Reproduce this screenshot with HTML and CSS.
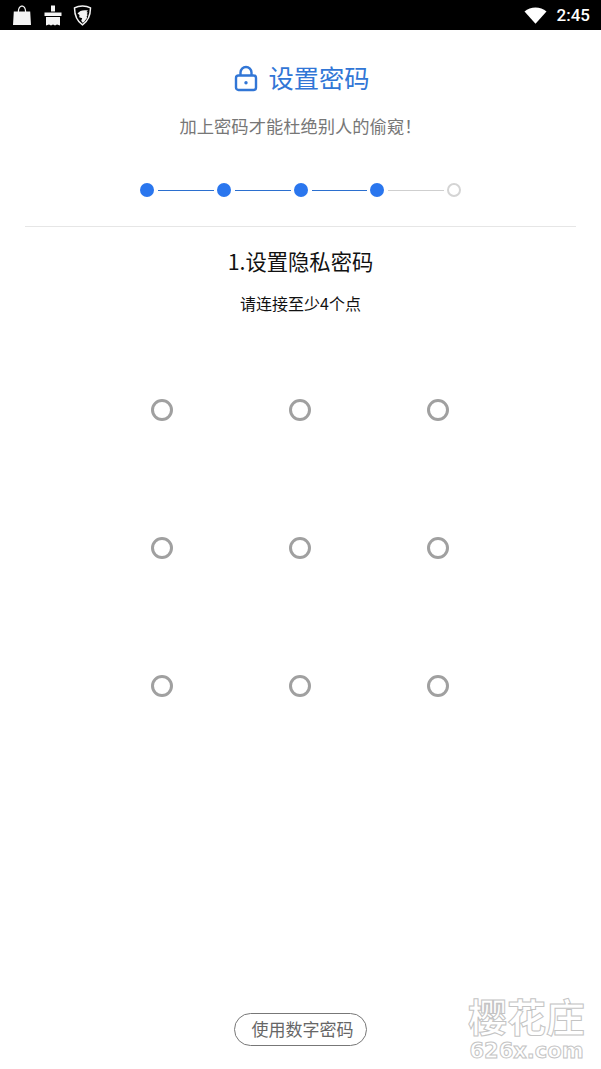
FILE: index.html
```html
<!DOCTYPE html>
<html lang="zh">
<head>
    <meta charset="UTF-8">
    <meta name="viewport" content="width=device-width, initial-scale=1.0">
    <title>设置密码</title>
    <link rel="stylesheet" href="styles.css">
</head>
<body>
    <div class="statusBar">
        <div class="statusLeft">
            <svg width="20" height="21" viewBox="0 0 20 21"><path d="M1.800 6.500H5.800C5.900 2.800 7.600 .5 10 .5s4.100 2.300 4.200 6h4L19 20H1zM7 6.500h6C12.900 3.500 11.700 1.700 10 1.700S7.100 3.500 7 6.500z" fill="#f4f4f4"/></svg>
            <svg width="18" height="21" viewBox="0 0 18 21"><path d="M7 .5h4v6h-4zM.5 7.500h17v3.500H.5zM2 12h14v8.500l-3-1-2 1-2-1-2 1-2-1-3 1z" fill="#f4f4f4"/></svg>
            <svg class="shield" width="19" height="21" viewBox="0 0 19 21"><path d="M9.500 1c3 0 5.800.7 8 1.900-.1 6.500-1.600 12.600-8 17C3.100 15.500 1.600 9.400 1.500 2.900 3.700 1.700 6.500 1 9.500 1z" fill="none" stroke="#f4f4f4" stroke-width="1.500"/><path d="M4.500 8.500C6.500 5.500 10.500 4.500 15 5.500l-1.500 1.500 1.500.8-1.300 1.200 1 1-1 1.300.3 1.700-3 4-1.300.7-1.500-2 1-2.500-3-1L6.500 10z" fill="#f4f4f4"/></svg>
        </div>
        <div class="statusRight">
            <svg width="23" height="17" viewBox="0 0 23 17"><path d="M.5 4.500C6.500-.8 16.500-.8 22.500 4.500L11.500 16.800z" fill="#fff"/></svg>
            <span class="time">2:45</span>
        </div>
    </div>

    <div class="page">
        <div class="header">
            <h1 class="title">
                <svg class="lock" width="24" height="27" viewBox="0 0 24 27"><path d="M6.500 11V7.500a5.500 5.500 0 0 1 11 0V11" fill="none" stroke="#3176d6" stroke-width="2.400"/><rect x="2" y="10.500" width="20" height="14.500" rx="2.500" fill="none" stroke="#3176d6" stroke-width="2.400"/><circle cx="12" cy="17.800" r="1.700" fill="#3176d6"/></svg>
                设置密码
            </h1>
            <p class="subTitle">加上密码才能杜绝别人的偷窥！</p>
        </div>

        <div class="steps">
            <i class="dot"></i><i class="line"></i>
            <i class="dot"></i><i class="line"></i>
            <i class="dot"></i><i class="line"></i>
            <i class="dot"></i><i class="line off"></i>
            <i class="dot off"></i>
        </div>

        <div class="setBox">
            <h2 class="setTitle">1.设置隐私密码</h2>
            <p class="setHint">请连接至少4个点</p>
        </div>

        <div class="pattern">
            <span class="point"></span><span class="point"></span><span class="point"></span>
            <span class="point"></span><span class="point"></span><span class="point"></span>
            <span class="point"></span><span class="point"></span><span class="point"></span>
        </div>

        <a class="numBtn" href="javascript:;">使用数字密码</a>
    </div>

    <div class="mark">
        <div class="markBig">樱花庄</div>
        <div class="markSmall">626x.com</div>
    </div>
</body>
</html>
```

FILE: styles.css
```css
*{
    margin: 0;
    padding: 0;
    box-sizing: border-box;
}
body{
    width: 601px;
    height: 1069px;
    overflow: hidden;
    background-color: #fff;
    font-family: "Noto Sans CJK SC", "Noto Sans", sans-serif;
    position: relative;
}

.statusBar{
    height: 30px;
    background-color: #000;
    display: flex;
    justify-content: space-between;
    align-items: center;
    padding: 0 11px 0 12px;
}
.statusLeft{
    display: flex;
    align-items: center;
    gap: 12px;
}
.shield{
    margin-left: -1px;
}
.statusRight{
    display: flex;
    align-items: center;
    gap: 10px;
}
.time{
    color: #fff;
    font-family: Roboto, sans-serif;
    font-size: 17px;
    font-weight: 500;
}

.page{
    height: 1039px;
    display: flex;
    flex-direction: column;
    align-items: center;
}
.header{
    height: 197px;
    width: 551px;
    padding-top: 29px;
    text-align: center;
    border-bottom: 1px solid #e6e6e6;
}
.title{
    display: flex;
    justify-content: center;
    align-items: center;
    gap: 10px;
    height: 36px;
    padding-left: 3px;
    color: #3176d6;
    font-size: 25.300px;
    font-weight: 400;
}
.lock{
    margin-top: 2px;
}
.subTitle{
    margin-top: 18px;
    color: #777;
    font-size: 17.300px;
    line-height: 26px;
}

.steps{
    position: absolute;
    top: 183px;
    left: 140px;
    display: flex;
    align-items: center;
}
.dot{
    width: 14px;
    height: 14px;
    border-radius: 50%;
    background-color: #2a76ee;
}
.dot.off{
    background-color: #fff;
    border: 2px solid #d4d4d4;
}
.line{
    width: 55.750px;
    height: 1px;
    margin: 0 3px 0 4px;
    background-color: #2b6fcf;
}
.line.off{
    background-color: #cfcfcf;
}

.setBox{
    text-align: center;
    color: #111;
}
.setTitle{
    margin-top: 18px;
    font-size: 21.300px;
    font-weight: 400;
    line-height: 32px;
}
.setHint{
    margin-top: 14px;
    font-size: 16px;
    line-height: 24px;
}

.pattern{
    margin-top: 26px;
    margin-left: -1px;
    display: grid;
    grid-template-columns: repeat(3, 138px);
    grid-auto-rows: 138px;
    place-items: center;
}
.point{
    width: 22px;
    height: 22px;
    border-radius: 50%;
    border: 3px solid #a0a0a0;
}

.numBtn{
    margin-top: auto;
    margin-bottom: 23px;
    width: 133px;
    height: 33px;
    border: 1px solid #777;
    border-radius: 17px;
    color: #666;
    font-size: 17px;
    line-height: 29px;
    text-align: center;
    text-decoration: none;
    padding-left: 4px;
}

.mark{
    position: absolute;
    right: 16px;
    bottom: 6px;
    text-align: center;
    color: #fff;
    -webkit-text-stroke: 1px #c4c4c4;
}
.markBig{
    font-size: 39px;
    font-weight: 700;
    line-height: 48px;
}
.markSmall{
    font-family: "DejaVu Sans", sans-serif;
    font-weight: 700;
    font-size: 21px;
    line-height: 24px;
}
```
